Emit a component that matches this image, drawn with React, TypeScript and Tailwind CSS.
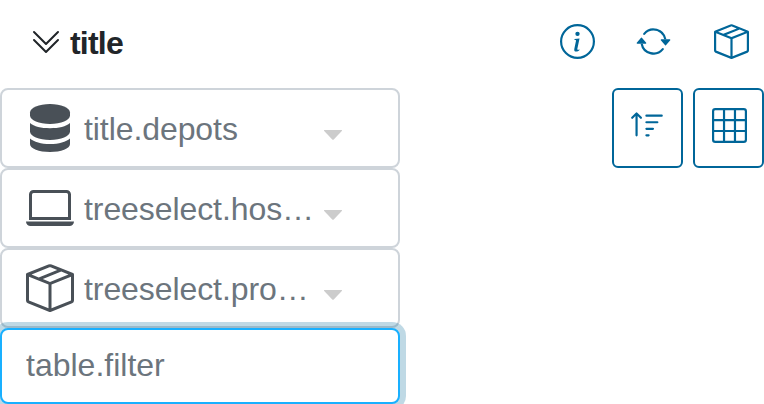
import { BsArrowRepeat, BsBoxSeam, BsChevronDoubleDown, BsGrid3X3, BsInfoCircle, BsLaptop, BsSortUp } from "react-icons/bs";
import type { ReactNode } from "react";

function DatabaseIcon() {
  return (
    <svg width="48" height="48" viewBox="0 0 48 48" fill="currentColor">
      <path d="M4 8.500C4 3.800 13 0 24 0S44 3.800 44 8.500V11.500C44 16.200 35 20 24 20S4 16.200 4 11.500Z" />
      <path d="M4 19C8 22.500 15 24.200 24 24.200S40 22.500 44 19V27.500C44 32.200 35 36 24 36S4 32.200 4 27.500Z" />
      <path d="M4 34.500C8 38 15 40 24 40S40 38 44 34.500V40C44 44.500 35 48 24 48S4 44.500 4 40Z" />
    </svg>
  );
}

function TreeSelect({ icon, label }: { icon: ReactNode; label: string }) {
  return (
    <div className="flex h-20 w-[400px] items-start rounded-[8px] border-2 border-[#ced4da] pl-6 pt-[14px]">
      <span className="shrink-0 text-[#495057]">{icon}</span>
      <span className="ml-[10px] w-[240px] whitespace-nowrap pt-[1px] text-[32px] leading-[48px] tracking-[-0.08px] text-[#6c757d]">{label}</span>
      <svg width="18" height="10" viewBox="0 0 18 10" className="mt-[26px] shrink-0" fill="#cccccc">
        <path d="M.5 0H17.500Q18.500 0 17.800 1L10 9.300Q9 10.300 8 9.300L.2 1Q-.5 0 .5 0Z" />
      </svg>
    </div>
  );
}

function ToolButton({ children }: { children: ReactNode }) {
  return (
    <button className="flex h-20 w-[71px] items-start justify-center rounded-[6px] border-2 border-[#006699] pt-[18px]">
      {children}
    </button>
  );
}

export default function App() {
  return (
    <main className="h-[404px] w-[764px] overflow-hidden bg-white font-['Liberation_Sans',Arial,sans-serif]">
      <header className="flex h-[88px] items-start justify-between pl-[30px] pr-[15px] text-[#212529]">
        <div className="flex">
          <BsChevronDoubleDown size={32} className="mt-[26px]" />
          <h1 className="ml-2 mt-[19px] text-[32px] font-bold leading-[48px] tracking-[-0.8px]">title</h1>
        </div>
        <nav className="flex pt-6 text-[#006699]">
          <BsInfoCircle size={35} />
          <BsArrowRepeat size={35} className="ml-[41px] mr-[43px]" />
          <BsBoxSeam size={35} />
        </nav>
      </header>
      <div className="flex justify-between">
        <section>
          <TreeSelect icon={<DatabaseIcon />} label="title.depots" />
          <TreeSelect icon={<BsLaptop size={48} />} label="treeselect.hos…" />
          <TreeSelect icon={<BsBoxSeam size={48} />} label="treeselect.pro…" />
          <input
            aria-label="Filter"
            placeholder="table.filter"
            className="block h-[76px] w-[400px] rounded-[8px] border-2 border-[#19b0ff] bg-white px-6 pb-[2px] text-[32px] text-[#495057] shadow-[0_0_0_6px_rgba(0,102,153,0.25)] outline-none placeholder:text-[#6c757d]"
          />
        </section>
        <section className="flex gap-[10px] text-[#006699]">
          <ToolButton><BsSortUp size={35} /></ToolButton>
          <ToolButton><BsGrid3X3 size={35} className="ml-[2px]" /></ToolButton>
        </section>
      </div>
    </main>
  );
}
